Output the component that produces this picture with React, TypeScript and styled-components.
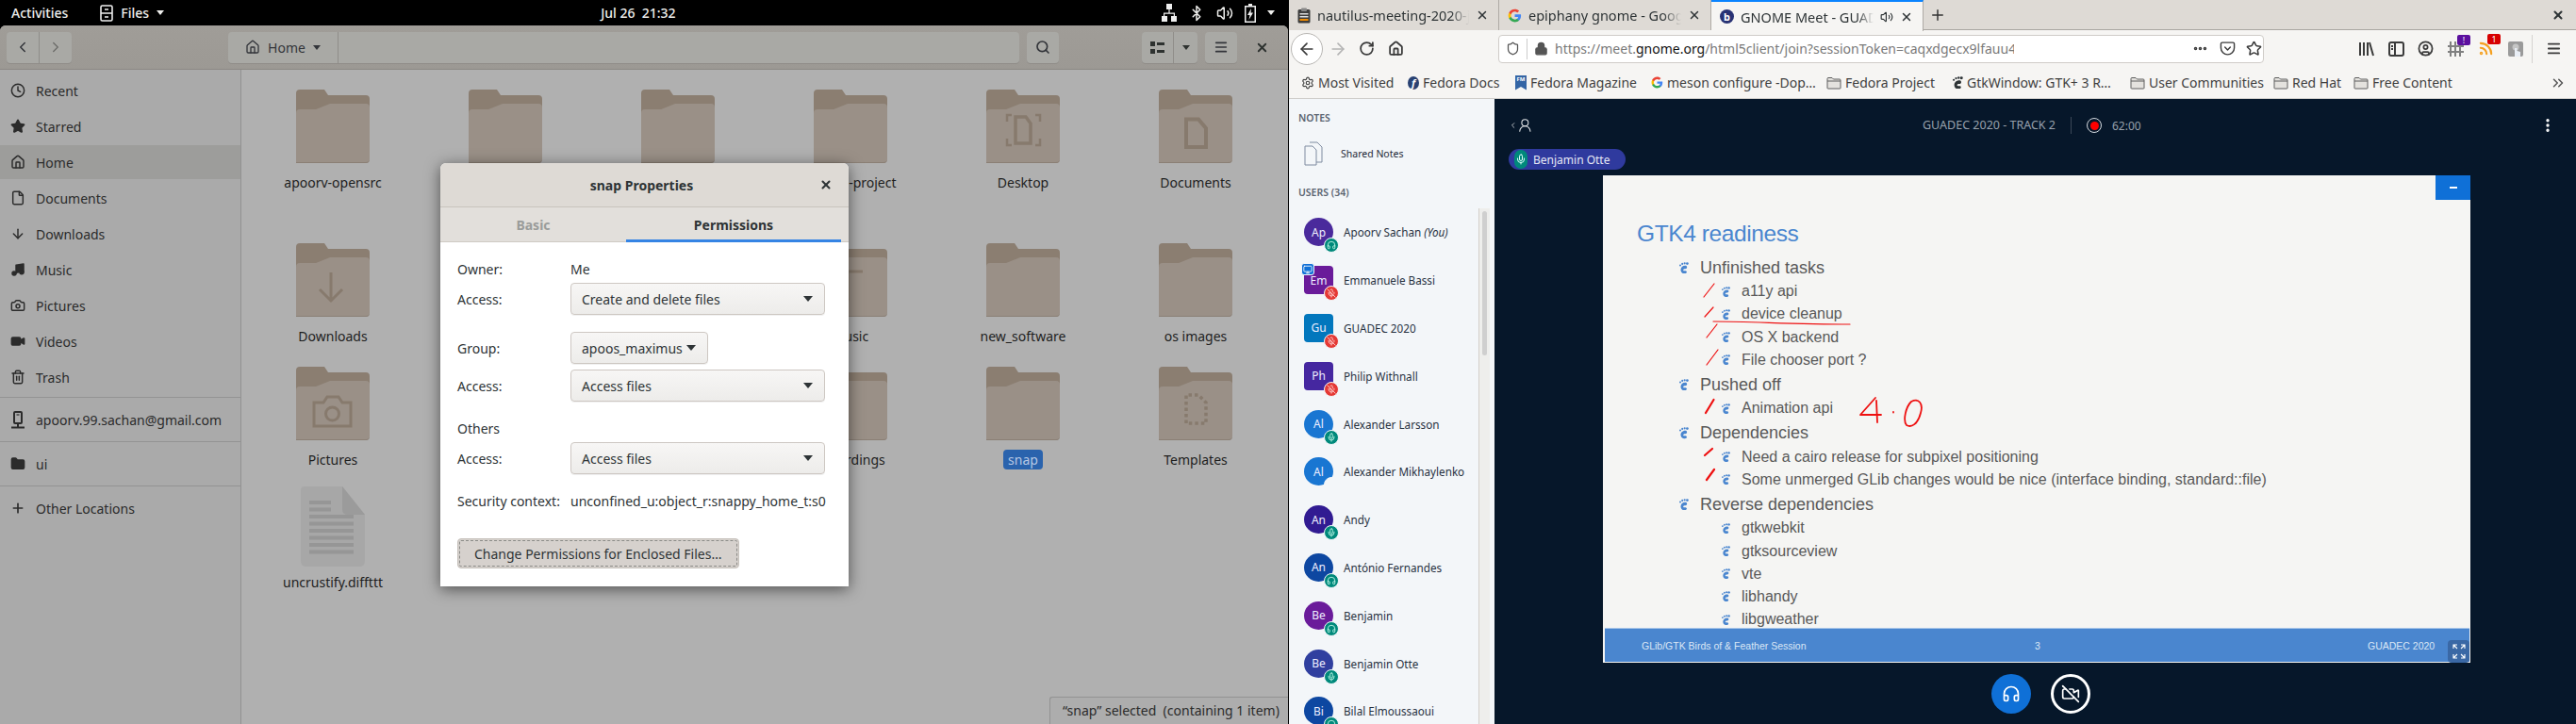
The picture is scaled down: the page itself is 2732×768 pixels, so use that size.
import React from "react";
import styled, { createGlobalStyle } from "styled-components";
import { Clock, Star, Home, File, ArrowDown, Music, Camera, Video, Trash2, Folder as FolderIc, Plus, Search, Menu, X, ChevronLeft, ChevronRight, ArrowLeft, ArrowRight, RotateCw, Shield, Lock, Headphones, Mic, MicOff, Monitor, Volume2, Bluetooth, Settings, CircleUser, ChevronsRight, Rss, VideoOff, UserRound, EllipsisVertical, Pocket, Ellipsis } from "lucide-react";

const Global = createGlobalStyle`
  html, body { margin: 0; padding: 0; background: #000; }
  body { font-family: "Noto Sans", "Open Sans", sans-serif; overflow: hidden; }
  * { box-sizing: border-box; }
`;

const Screen = styled.div`display: flex; width: 2732px; height: 768px; overflow: hidden;`;
const LeftMonitor = styled.div`width: 1367px; height: 768px; display: flex; flex-direction: column; background: #000;`;
const TopBar = styled.div`height: 27px; background: #000; color: #eeeeec; font-size: 14px; display: flex; align-items: center; padding: 0 0 0 12px; position: relative; flex: none;`;
const TopItem = styled.span`font-weight: 500;`;
const AppMenu = styled.div`display: flex; align-items: center; margin-left: 34px; gap: 8px;`;
const Clockface = styled.span`margin-left: 463px; width: 86px; font-size: 14px; font-weight: 500; white-space: pre;`;
const Tray = styled.div`display: flex; align-items: center; margin-left: auto; margin-right: 15px; gap: 12px;`;
const Caret = styled.i<{ $c?: string; $s?: number }>`display: inline-block; width: 0; height: 0; border-left: ${p => p.$s ?? 4}px solid transparent; border-right: ${p => p.$s ?? 4}px solid transparent; border-top: ${p => (p.$s ?? 4) + 1}px solid ${p => p.$c ?? "#eeeeec"};`;

const FilesWindow = styled.div`flex: 1; position: relative; display: flex; flex-direction: column; width: 1366px; background: #b0b0b0; border-radius: 6px 6px 0 0; overflow: hidden;`;
const HeaderBar = styled.div`height: 47px; flex: none; display: flex; align-items: center; padding-left: 7px; background: linear-gradient(#a09d98, #9c9994); border-bottom: 1px solid #8c8984;`;
const Linked = styled.div<{ $ml?: number }>`display: flex; height: 33px; margin-left: ${p => p.$ml ?? 0}px; border-radius: 4px; background: #a9a9a5; box-shadow: 0 1px 0 #8f8c88; color: #2e3230;`;
const HBtn = styled.div<{ $w: number; $div?: boolean; $dim?: boolean }>`width: ${p => p.$w}px; display: flex; align-items: center; justify-content: center; gap: 8px; font-size: 14px; color: ${p => p.$dim ? "#6f6f6c" : "#33353a"}; ${p => p.$div ? "border-right: 1px solid #8f8d89;" : ""}`;
const PathBar = styled(Linked)`width: 839px;`;
const ViewDots = styled.div`display: grid; grid-template-columns: 5px 8px; gap: 3px 2px; align-items: center; & i { height: 3px; background: #2e3230; display: block; } & i:nth-child(odd) { width: 5px; height: 5px; }`;
const CloseWrap = styled.div`margin-left: 19px; display: flex; color: #2e3230;`;
const FilesBody = styled.div`flex: 1; display: flex; min-height: 0;`;
const Side = styled.div`width: 256px; flex: none; background: #aaaaaa; border-right: 1px solid #929292; padding-top: 4px;`;
const SideRow = styled.div<{ $on?: boolean }>`height: 36px; margin-bottom: 2px; display: flex; align-items: center; color: #2b2b2b; font-size: 14px; background: ${p => p.$on ? "#9d9d9b" : "transparent"}; & svg { flex: none; }`;
const SideIcon = styled.span`width: 38px; display: flex; justify-content: center; padding-left: 7px; padding-right: 8px;`;
const SideSep = styled.div`height: 1px; background: #939393; margin: 3px 0 5px;`;
const SideRowLast = styled(SideRow)`margin-bottom: 0;`;
const SideSep2 = styled(SideSep)`margin-top: 5px;`;

const Grid = styled.div`flex: 1; display: grid; grid-template-columns: repeat(6, 183px); grid-template-rows: 163px 131px 130px auto; padding: 12px 0 0 5.5px;`;
const Cell = styled.div`display: flex; flex-direction: column; align-items: center;`;
const IconBox = styled.div`height: 96px; width: 96px; display: flex; align-items: center; justify-content: center; flex: none;`;
const Label = styled.div<{ $sel?: boolean }>`height: 21px; line-height: 21px; font-size: 14px; margin-top: 1px; color: ${p => p.$sel ? "#b7c8e4" : "#1e1e1e"}; background: ${p => p.$sel ? "#2a63ad" : "transparent"}; padding: 0 5px; border-radius: 4px; white-space: nowrap;`;
const StatusBox = styled.div`position: absolute; right: 0; bottom: 0; width: 253px; height: 29px; background: #adadad; border: 1px solid #929292; border-right: 0; border-bottom: 0; border-radius: 3px 0 0 0; font-size: 14px; color: #2b2b2b; padding-left: 13px; line-height: 27px; white-space: pre;`;

const Modal = styled.div`position: absolute; left: 467px; top: 146px; width: 433px; height: 449px; border-radius: 6px 6px 0 0; background: #fff; box-shadow: 0 3px 16px rgba(0,0,0,.55); color: #2e3436; font-size: 14px; display: flex; flex-direction: column; overflow: hidden;`;
const ModalTitle = styled.div`height: 47px; flex: none; background: #dedad5; border-bottom: 1px solid #c8c4bd; display: flex; align-items: center; justify-content: center; font-weight: 700; position: relative; padding-right: 6px;`;
const ModalClose = styled.span`position: absolute; right: 17px; top: 16px; display: flex;`;
const TabRow = styled.div`height: 37px; flex: none; background: #e2dfdb; border-bottom: 1px solid #cfcac4; display: flex; padding: 0 8px 0 0;`;
const ModalTab = styled.div<{ $on?: boolean; $w: number }>`width: ${p => p.$w}px; height: 37px; display: flex; align-items: center; justify-content: center; font-weight: 700; color: ${p => p.$on ? "#2e3436" : "#9a9c9a"}; border-bottom: ${p => p.$on ? "3px solid #3584e4" : "0"}; padding-top: ${p => p.$on ? "3px" : "0"};`;
const ModalBody = styled.div`padding: 0 25px 0 18px; display: flex; flex-direction: column;`;
const FormRow = styled.div<{ $top: number; $h?: number }>`display: grid; grid-template-columns: 120px 1fr; align-items: center; margin-top: ${p => p.$top}px; height: ${p => p.$h ?? 34}px; white-space: nowrap;`;
const Select = styled.div<{ $w?: number }>`height: 34px; width: ${p => p.$w ? p.$w + "px" : "100%"}; border: 1px solid #cdc7c2; border-radius: 4px; background: linear-gradient(#f7f6f5, #edecea); box-shadow: 0 1px 0 rgba(0,0,0,.06); display: flex; align-items: center; justify-content: space-between; padding: 0 12px 0 11px;`;
const ChangeBtn = styled.div`margin-top: 30px; width: 299px; height: 32px; border: 1px solid #c6c1bb; border-radius: 4px; background: #d6d1cd; padding: 1px; `;
const ChangeIn = styled.div`height: 100%; border: 1px dashed #8b8b87; border-radius: 2px; display: flex; align-items: center; padding-left: 15px;`;

const RightMonitor = styled.div`width: 1365px; height: 768px; display: flex; flex-direction: column; background: #f6f5f3;`;
const TabStrip = styled.div`height: 32px; flex: none; background: #dedad5; border-bottom: 1px solid #a9a6a1; display: flex; align-items: stretch; position: relative;`;
const BrowserTab = styled.div<{ $w: number; $on?: boolean }>`width: ${p => p.$w}px; flex: none; display: flex; align-items: center; padding: 0 10px 0 9px; gap: 7px; font-size: 14.5px; color: #2e3436; border-right: 1px solid #aeaaa5; background: ${p => p.$on ? "#f6f5f3" : "#dedad5"}; border-top: ${p => p.$on ? "2px solid #0a84ff" : "0"}; height: ${p => p.$on ? "33px" : "32px"};`;
const TabTitle = styled.span`flex: 1; overflow: hidden; white-space: nowrap; -webkit-mask-image: linear-gradient(90deg, #000 88%, transparent); mask-image: linear-gradient(90deg, #000 88%, transparent);`;
const PlusBtn = styled.div`display: flex; align-items: center; padding-left: 6px; color: #333;`;
const StripClose = styled.div`margin-left: auto; margin-right: 12px; display: flex; align-items: center; color: #2e3436;`;
const NavBar = styled.div`height: 39px; flex: none; display: flex; align-items: center; padding-left: 2px; color: #3b3b3b;`;
const BackCircle = styled.div`width: 34px; height: 34px; border-radius: 50%; border: 1px solid #b8b6b3; background: #fff; display: flex; align-items: center; justify-content: center;`;
const NavIcon = styled.span<{ $ml: number; $c?: string }>`margin-left: ${p => p.$ml}px; display: flex; position: relative; color: ${p => p.$c ?? "#3b3b3b"};`;
const UrlBox = styled.div`margin-left: 100px; width: 812px; height: 30px; background: #fff; border: 1px solid #cfccc8; border-radius: 4px; display: flex; align-items: center; padding-left: 7px; font-size: 14px; color: #7a7a7a;`;
const UrlSep = styled.span`width: 1px; height: 22px; background: #ccc; margin: 0 7px 0 7px;`;
const UrlText = styled.span`margin-left: 7px; white-space: nowrap; width: 487px; overflow: hidden;`;
const UrlHost = styled.b`font-weight: 400; color: #111;`;
const NavSep = styled.span`width: 1px; height: 30px; background: #d5d3d0; margin-left: 9px;`;
const MiniBadge = styled.span<{ $bg: string }>`position: absolute; top: -7px; right: -7px; width: 14px; height: 11px; border-radius: 2px; background: ${p => p.$bg}; color: #fff; font-size: 9px; line-height: 11px; text-align: center;`;
const Bookmarks = styled.div`height: 34px; flex: none; display: flex; align-items: center; padding-left: 13px; font-size: 14px; color: #3f3f3f; border-bottom: 1px solid #cfcdca; white-space: nowrap;`;
const Bm = styled.span<{ $w: number }>`width: ${p => p.$w}px; flex: none; display: flex; align-items: center; gap: 4px;`;
const RoundIc = styled.span<{ $bg: string; $plain?: boolean }>`width: ${p => p.$plain ? 15 : 12}px; height: ${p => p.$plain ? 15 : 14}px; border-radius: 50%; background: ${p => p.$bg}; color: #fff; font-size: 11px; font-weight: 700; font-style: ${p => p.$plain ? "normal" : "italic"}; line-height: ${p => p.$plain ? 15 : 14}px; text-align: center; flex: none;`;
const FmIc = styled.span`width: 12px; height: 16px; background: #3465a4; color: #fff; font-size: 6px; line-height: 9px; text-align: center; clip-path: polygon(0 0, 100% 0, 100% 100%, 50% 78%, 0 100%); flex: none; font-weight: 700;`;
const BmEnd = styled.span`margin-left: auto; margin-right: 10px; display: flex; color: #555;`;

const Meet = styled.div`flex: 1; min-height: 0; display: flex;`;
const UserPanel = styled.div`width: 218px; flex: none; background: #f3f6f9; display: flex; flex-direction: column; padding-top: 13px; overflow: hidden;`;
const PanelHead = styled.div<{ $mt?: number }>`height: 14px; line-height: 14px; font-size: 10.5px; font-weight: 600; color: #5b6572; padding-left: 10px; margin-top: ${p => p.$mt ?? 0}px; white-space: nowrap;`;
const NotesRow = styled.div`height: 30px; margin-top: 16px; padding-left: 16px; display: flex; align-items: center; gap: 19px; font-size: 10.5px; color: #1f2a38;`;
const UserWrap = styled.div`flex: 1; display: flex; margin-top: 10px; min-height: 0;`;
const UserList = styled.div`flex: 1; min-width: 0; overflow: hidden; padding-left: 16px;`;
const UserRow = styled.div`height: 50.8px; display: flex; align-items: center; gap: 11px; font-size: 11.7px; color: #27313f; white-space: nowrap;`;
const Avatar = styled.div<{ $bg: string; $sq?: boolean }>`width: 31px; height: 30px; flex: none; background: ${p => p.$bg}; border-radius: ${p => p.$sq ? "4px" : "50%"}; color: #eef; font-size: 12px; display: flex; align-items: center; justify-content: center; position: relative;`;
const Badge = styled.span<{ $bg: string }>`position: absolute; right: -6px; bottom: -7px; width: 16px; height: 16px; border-radius: 50%; background: ${p => p.$bg}; border: 1px solid #f3f6f9; color: #cfe; display: flex; align-items: center; justify-content: center;`;
const Presenter = styled.span`position: absolute; left: -3px; top: -3px; width: 14px; height: 13px; border-radius: 3px; background: #0f70d7; border: 1px solid #f3f6f9; color: #fff; display: flex; align-items: center; justify-content: center;`;
const Track = styled.div`width: 12px; margin-right: 5px; flex: none; background: #eeeeec; border-left: 1px solid #d4cfca; padding: 3px 3px 0 3px;`;
const Thumb = styled.div`height: 153px; border-radius: 3px; background: #cfcfcf;`;
const Stage = styled.div`flex: 1; background: #06172a; display: flex; flex-direction: column; min-width: 0;`;
const StageTop = styled.div`height: 53px; padding-top: 3px; display: flex; align-items: center; flex: none; color: #d5dae0;`;
const StageUser = styled.span`margin-left: 15px; display: flex; align-items: center; width: 26px; color: #e8eaec;`;
const StageTitle = styled.span`margin-left: 413px; font-size: 12.500px; color: #98a1ac; white-space: nowrap; width: 158px; border-right: 1px solid #3b4858; line-height: 18px;`;
const RecDot = styled.span`margin-left: 16px; width: 16px; height: 16px; border-radius: 50%; border: 1px solid #d5dae0; display: flex; align-items: center; justify-content: center; flex: none; & i { width: 9px; height: 9px; border-radius: 50%; background: #f00; display: block; }`;
const RecTime = styled.span`margin-left: 11px; font-size: 12px; color: #98a1ac;`;
const StageDots = styled.span`margin-left: auto; margin-right: 21px; display: flex; color: #fff;`;
const TalkerRow = styled.div`height: 22px; margin: 0 0 6px 15px; flex: none;`;
const Talker = styled.div`display: inline-flex; height: 22px; align-items: center; width: 124px; padding-left: 6px; gap: 6px; border-radius: 11px; background: #2f3a9e; color: #e6e8f5; font-size: 12px; white-space: nowrap;`;
const TalkerMic = styled.span`width: 14px; height: 20px; border-radius: 7px; background: #00897b; display: flex; align-items: center; justify-content: center; color: #dff;`;
const Slide = styled.div`margin-left: 115px; width: 920px; height: 517px; flex: none; background: #f5f5f3; position: relative; overflow: hidden; padding-top: 46px; font-family: "Liberation Sans", Arial, sans-serif; color: #595959;`;
const SlideTitle = styled.div`height: 32px; line-height: 32px; margin: 0 0 7px 36px; font-size: 24.500px; color: #4a86cf; letter-spacing: -0.4px;`;
const ItemA = styled.div<{ $first?: boolean }>`height: 26px; margin: ${p => p.$first ? 0 : 1}px 0 0 81px; display: flex; align-items: center; gap: 12px; font-size: 18px;`;
const ItemB = styled.div`height: 24.3px; margin-left: 125.5px; display: flex; align-items: center; gap: 12.5px; font-size: 16px; white-space: nowrap;`;
const SlideFooter = styled.div`position: absolute; left: 2px; right: 1px; bottom: 1px; height: 36px; background: #4a86cf; border-top: 1px solid #a9c6e8; color: #dbe6f5; font-size: 10.5px; display: flex; align-items: center; padding-left: 39px;`;
const FootA = styled.span`width: 417px; white-space: nowrap;`;
const FootB = styled.span`width: 353px;`;
const MinBtn = styled.div`position: absolute; right: 0; top: 0; width: 37px; height: 26px; background: #0f70d7; display: flex; justify-content: center; & i { width: 8px; height: 1.5px; margin-top: 12px; background: #fff; display: block; }`;
const FullBtn = styled.div`position: absolute; right: 1px; bottom: 0; width: 23px; height: 24px; border-radius: 4px; background: #3a68a5; color: #fff; display: flex; align-items: center; justify-content: center;`;
const Annot = styled.svg`position: absolute; left: 0; top: 0; pointer-events: none;`;
const Controls = styled.div`margin: 12px 0 0 527px; display: flex; gap: 21px; flex: none;`;
const RoundBtn = styled.div<{ $on?: boolean }>`width: 42px; height: 42px; border-radius: 50%; display: flex; align-items: center; justify-content: center; color: #fff; background: ${p => p.$on ? "#0f70d7" : "#06172a"}; border: ${p => p.$on ? "0" : "3px solid #fff"};`;

const Foot = ({ w, c = "#4a86cf" }: { w: number; c?: string }) => (
  <svg width={w} height={w * 1.25} viewBox="0 0 10 12.5" style={{ flex: "none" }}>
    <g fill={c}>
      <circle cx="1" cy="3.4" r="1" /><circle cx="3.2" cy="1.9" r="1.05" /><circle cx="5.7" cy="1.3" r="1.1" /><ellipse cx="8.4" cy="1.6" rx="1.4" ry="1.3" />
      <path d="M6.8 3.8C3.4 3.6 1.2 6 1.5 8.8 1.8 11.6 4.4 12.8 6.6 12.1 8.2 11.6 8.4 9.9 7.2 9.4 5.9 8.9 5.1 9.7 4.3 8.9 3.8 7.9 4.8 7.2 6.3 7.2 7.9 7.2 8.5 5.9 8 4.8 7.7 4.1 7.3 3.8 6.8 3.8Z" />
    </g>
  </svg>
);
const GLogo = ({ s }: { s: number }) => (
  <svg width={s} height={s} viewBox="0 0 24 24" style={{ flex: "none" }}>
    <path fill="#4285F4" d="M22.56 12.25c0-.78-.07-1.53-.2-2.25H12v4.26h5.92c-.26 1.37-1.04 2.53-2.21 3.31v2.77h3.57c2.08-1.92 3.28-4.74 3.28-8.09z" />
    <path fill="#34A853" d="M12 23c2.97 0 5.46-.98 7.28-2.66l-3.57-2.77c-.98.66-2.23 1.06-3.71 1.06-2.86 0-5.29-1.93-6.16-4.53H2.18v2.84C3.99 20.53 7.7 23 12 23z" />
    <path fill="#FBBC05" d="M5.84 14.09c-.22-.66-.35-1.36-.35-2.09s.13-1.43.35-2.09V7.07H2.18C1.43 8.55 1 10.22 1 12s.43 3.45 1.18 4.93l2.85-2.22.81-.62z" />
    <path fill="#EA4335" d="M12 5.38c1.62 0 3.06.56 4.21 1.64l3.15-3.15C17.45 2.09 14.97 1 12 1 7.7 1 3.99 3.47 2.18 7.07l3.66 2.84c.87-2.6 3.3-4.53 6.16-4.53z" />
  </svg>
);
const BmFolder = () => (
  <svg width="16" height="14" viewBox="0 0 16 14" style={{ flex: "none" }}><path d="M1 12.5V2.5Q1 1.5 2 1.5H6L7.5 3H14Q15 3 15 4V12.5Q15 13 14 13H2Q1 13 1 12.5Z M1 5H15" fill="#e4e2de" stroke="#5e5e5e" /></svg>
);
const Clipboard = () => (
  <svg width="14" height="17" viewBox="0 0 14 17" style={{ flex: "none" }}>
    <rect x="0.500" y="2" width="13" height="14.500" rx="1.500" fill="#3d3d3d" />
    <rect x="4" y="0.500" width="6" height="3.500" rx="1" fill="#888" />
    <rect x="2.500" y="6" width="9" height="1.500" fill="#ddd" /><rect x="2.500" y="9" width="9" height="1.500" fill="#ddd" />
    <rect x="2.500" y="12" width="9" height="2" fill="#f08a00" />
  </svg>
);
const DriveIc = () => (
  <svg width="16" height="19" viewBox="0 0 16 19" style={{ flex: "none" }} fill="none" stroke="#2b2b2b" strokeWidth="2">
    <rect x="4" y="1" width="8" height="12" rx="1" /><path d="M8 13V17M1 17.500H15" /><path d="M6.500 4H9.500" strokeWidth="1.200" />
  </svg>
);
const Expand = () => (
  <svg width="14" height="16" viewBox="0 0 14 16" fill="none" stroke="#fff" strokeWidth="1.100">
    <path d="M1 5V1H5M1 1L5 5M13 5V1H9M13 1L9 5M1 11V15H5M1 15L5 11M13 11V15H9M13 15L9 11" />
  </svg>
);

type Emblem = "none" | "down" | "music" | "camera" | "doc" | "desk" | "tmpl";
const FolderIcon = ({ e = "none" }: { e?: Emblem }) => (
  <svg width="78" height="78" viewBox="0 0 78 78">
    <path d="M0 4Q0 0 4 0H30L34 6H74Q78 6 78 10V40H0Z" fill="#8b7e71" />
    <path d="M0 25Q0 21 4 21H21L36 15H74Q78 15 78 19V73Q78 78 74 78H0Z" fill="#9a9087" />
    <path d="M0 77H74Q78 77 78 73V74Q78 78 74 78H0Z" fill="#8a7f75" />
    <g fill="none" stroke="#877a6d" strokeWidth="3">
      {e === "down" && <path d="M37 31V61M25 49L37 61L49 49" />}
      {e === "music" && <><circle cx="30" cy="60" r="6" /><path d="M36 60V30H52" /></>}
      {e === "camera" && <><path d="M19 63V38H29L33 32H45L49 38H58V63Z" /><circle cx="38.500" cy="50" r="7" /></>}
      {e === "doc" && <path d="M29 58V28.500H42L50 38V58Z" strokeWidth="4" transform="translate(0 3)" />}
      {e === "desk" && <><path d="M31 57V29H42L47 36V57Z" strokeWidth="3.500" /><path d="M22 34V27H27M57 34V27H52M22 52V59H27M57 52V59H52" strokeWidth="2.500" /></>}
      {e === "tmpl" && <path d="M29 60V30H42L50 38V60H29" strokeDasharray="3.500 3" strokeWidth="3.500" />}
    </g>
  </svg>
);
const DocIcon = () => (
  <svg width="68" height="85" viewBox="0 0 68 85">
    <path d="M4 0H44L68 30V79Q68 85 62 85H6Q0 85 0 79V4Q0 0 4 0Z" fill="#a7a7a7" />
    <path d="M44 0L68 30H50Q44 30 44 24Z" fill="#9b9b9b" />
    <g fill="#969696">
      <rect x="9" y="15" width="23" height="4" /><rect x="9" y="22.500" width="23" height="4" />
      {[30, 37.500, 45, 52.500, 60, 67.500].map(y => <rect key={y} x="9" y={y} width="47" height="4" />)}
    </g>
  </svg>
);

const Cabinet = () => (
  <svg width="14" height="18" viewBox="0 0 14 18"><rect x="1" y="1" width="12" height="16" rx="1.500" fill="none" stroke="#eee" strokeWidth="1.600" /><path d="M1 9H13M5 5H9M5 13H9" stroke="#eee" strokeWidth="1.500" /></svg>
);
const NetIc = () => (
  <svg width="16" height="19" viewBox="0 0 16 19" fill="#eee"><rect x="5" y="0" width="6" height="6" /><rect x="0" y="13" width="6" height="6" /><rect x="10" y="13" width="6" height="6" /><path d="M7.400 6h1.200v3.500H14v4h-1.200v-2.800H3.200v2.800H2v-4h5.400z" /></svg>
);
const BatIc = () => (
  <svg width="12" height="20" viewBox="0 0 12 20"><path d="M4 0H8V2H12V20H0V2H4Z" fill="#eee" /><rect x="1.500" y="3.500" width="9" height="15" fill="#000" /><path d="M7 5L3 12H5.500L4.500 17L9 9.500H6.500Z" fill="#eee" /></svg>
);
const SelectArrow = () => <Caret $c="#2e3436" $s={5} />;

const rows: { n: string; e?: Emblem; l?: string; sel?: boolean }[][] = [
  [{ n: "a", l: "apoorv-opensrc" }, { n: "b" }, { n: "c" }, { n: "d", l: "gnome-project" }, { n: "e", e: "desk", l: "Desktop" }, { n: "f", e: "doc", l: "Documents" }],
  [{ n: "g", e: "down", l: "Downloads" }, { n: "h" }, { n: "i" }, { n: "j", e: "music", l: "Music" }, { n: "k", l: "new_software" }, { n: "l", l: "os images" }],
  [{ n: "m", e: "camera", l: "Pictures" }, { n: "o" }, { n: "p" }, { n: "q", l: "Recordings" }, { n: "r", l: "snap", sel: true }, { n: "s", e: "tmpl", l: "Templates" }],
];
const side = [["Recent", Clock], ["Starred", Star], ["Home", Home], ["Documents", File], ["Downloads", ArrowDown], ["Music", Music], ["Pictures", Camera], ["Videos", Video], ["Trash", Trash2]] as const;
const filled = ["Starred", "Videos", "Music"];

type B = "head" | "mute" | "mic" | "none";
const users: { a: string; n: string; you?: boolean; bg: string; sq?: boolean; b: B; pres?: boolean }[] = [
  { a: "Ap", n: "Apoorv Sachan", you: true, bg: "#4a2a9c", b: "head" },
  { a: "Em", n: "Emmanuele Bassi", bg: "#6a1b9a", sq: true, b: "mute", pres: true },
  { a: "Gu", n: "GUADEC 2020", bg: "#0277bd", sq: true, b: "mute" },
  { a: "Ph", n: "Philip Withnall", bg: "#4527a0", sq: true, b: "mute" },
  { a: "Al", n: "Alexander Larsson", bg: "#1976d2", b: "mic" },
  { a: "Al", n: "Alexander Mikhaylenko", bg: "#1976d2", b: "none" },
  { a: "An", n: "Andy", bg: "#311b92", b: "mic" },
  { a: "An", n: "António Fernandes", bg: "#0d47a1", b: "head" },
  { a: "Be", n: "Benjamin", bg: "#6a1b9a", b: "head" },
  { a: "Be", n: "Benjamin Otte", bg: "#303f9f", b: "mic" },
  { a: "Bi", n: "Bilal Elmoussaoui", bg: "#0d47a1", b: "head" },
];
const UserBadge = ({ b }: { b: B }) => {
  if (b === "head") return <Badge $bg="#00897b"><Headphones size={10} /></Badge>;
  if (b === "mic") return <Badge $bg="#00897b"><Mic size={10} /></Badge>;
  if (b === "mute") return <Badge $bg="#e53935"><MicOff size={10} color="#fdd" /></Badge>;
  return <Badge $bg="#f3f6f9" />;
};

type Line = { t: string; top?: boolean; first?: boolean };
const lines: Line[] = [
  { t: "Unfinished tasks", top: true, first: true }, { t: "a11y api" }, { t: "device cleanup" }, { t: "OS X backend" }, { t: "File chooser port ?" },
  { t: "Pushed off", top: true }, { t: "Animation api" },
  { t: "Dependencies", top: true }, { t: "Need a cairo release for subpixel positioning" }, { t: "Some unmerged GLib changes would be nice (interface binding, standard::file)" },
  { t: "Reverse dependencies", top: true }, { t: "gtkwebkit" }, { t: "gtksourceview" }, { t: "vte" }, { t: "libhandy" }, { t: "libgweather" },
];

export default function App() {
  return (
    <Screen>
      <Global />
      <LeftMonitor>
        <TopBar>
          <TopItem>Activities</TopItem>
          <AppMenu><Cabinet /><TopItem>Files</TopItem><Caret /></AppMenu>
          <Clockface>{"Jul 26  21:32"}</Clockface>
          <Tray><NetIc /><Bluetooth size={18} /><Volume2 size={18} /><BatIc /><Caret /></Tray>
        </TopBar>
        <FilesWindow>
          <HeaderBar>
            <Linked>
              <HBtn $w={35} $div><ChevronLeft size={18} /></HBtn>
              <HBtn $w={34} $dim><ChevronRight size={18} /></HBtn>
            </Linked>
            <PathBar $ml={166}>
              <HBtn $w={117} $div><Home size={16} />Home<Caret $c="#33353a" /></HBtn>
            </PathBar>
            <Linked $ml={8}><HBtn $w={34}><Search size={16} strokeWidth={2.500} /></HBtn></Linked>
            <Linked $ml={88}>
              <HBtn $w={34} $div><ViewDots><i /><i /><i /><i /></ViewDots></HBtn>
              <HBtn $w={25}><Caret $c="#2e3230" /></HBtn>
            </Linked>
            <Linked $ml={8}><HBtn $w={34}><Menu size={16} strokeWidth={2.500} /></HBtn></Linked>
            <CloseWrap><X size={15} strokeWidth={3} /></CloseWrap>
          </HeaderBar>
          <FilesBody>
            <Side>
              {side.map(([t, I]) => (
                <SideRow key={t} $on={t === "Home"}>
                  <SideIcon><I size={16} strokeWidth={2.200} fill={filled.includes(t) ? "#2b2b2b" : "none"} /></SideIcon>{t}
                </SideRow>
              ))}
              <SideSep />
              <SideRowLast>
                <SideIcon><DriveIc /></SideIcon>apoorv.99.sachan@gmail.com
              </SideRowLast>
              <SideSep2 />
              <SideRowLast><SideIcon><FolderIc size={16} fill="#2b2b2b" /></SideIcon>ui</SideRowLast>
              <SideSep2 />
              <SideRowLast><SideIcon><Plus size={16} strokeWidth={2.500} /></SideIcon>Other Locations</SideRowLast>
            </Side>
            <Grid>
              {rows.flat().map(c => (
                <Cell key={c.n}>
                  <IconBox><FolderIcon e={c.e} /></IconBox>
                  {c.l && <Label $sel={c.sel}>{c.l}</Label>}
                </Cell>
              ))}
              <Cell>
                <IconBox><DocIcon /></IconBox>
                <Label>uncrustify.diffttt</Label>
              </Cell>
            </Grid>
          </FilesBody>
          <StatusBox>{"“snap” selected  (containing 1 item)"}</StatusBox>
          <Modal>
            <ModalTitle>snap Properties<ModalClose><X size={14} strokeWidth={3.500} /></ModalClose></ModalTitle>
            <TabRow>
              <ModalTab $w={197}>Basic</ModalTab>
              <ModalTab $w={228} $on>Permissions</ModalTab>
            </TabRow>
            <ModalBody>
              <FormRow $top={18} $h={20}><span>Owner:</span><span>Me</span></FormRow>
              <FormRow $top={5}><span>Access:</span><Select>Create and delete files<SelectArrow /></Select></FormRow>
              <FormRow $top={18}><span>Group:</span><Select $w={146}>apoos_maximus<SelectArrow /></Select></FormRow>
              <FormRow $top={6}><span>Access:</span><Select>Access files<SelectArrow /></Select></FormRow>
              <FormRow $top={18} $h={20}><span>Others</span><span /></FormRow>
              <FormRow $top={5}><span>Access:</span><Select>Access files<SelectArrow /></Select></FormRow>
              <FormRow $top={18} $h={20}><span>Security context:</span><span>unconfined_u:object_r:snappy_home_t:s0</span></FormRow>
              <ChangeBtn><ChangeIn>Change Permissions for Enclosed Files…</ChangeIn></ChangeBtn>
            </ModalBody>
          </Modal>
        </FilesWindow>
      </LeftMonitor>

      <RightMonitor>
        <TabStrip>
          <BrowserTab $w={223}><Clipboard /><TabTitle>nautilus-meeting-2020-jul</TabTitle><X size={14} strokeWidth={2.500} /></BrowserTab>
          <BrowserTab $w={225}><GLogo s={15} /><TabTitle>epiphany gnome - Google</TabTitle><X size={14} strokeWidth={2.500} /></BrowserTab>
          <BrowserTab $w={225} $on><RoundIc $bg="#283274" $plain>b</RoundIc><TabTitle>GNOME Meet - GUADEC</TabTitle><Volume2 size={14} /><X size={14} strokeWidth={2.500} /></BrowserTab>
          <PlusBtn><Plus size={18} /></PlusBtn>
          <StripClose><X size={14} strokeWidth={3.500} /></StripClose>
        </TabStrip>
        <NavBar>
          <BackCircle><ArrowLeft size={20} /></BackCircle>
          <NavIcon $ml={6} $c="#b4b4b4"><ArrowRight size={20} /></NavIcon>
          <NavIcon $ml={12}><RotateCw size={17} strokeWidth={2.500} /></NavIcon>
          <NavIcon $ml={14}><Home size={17} strokeWidth={2.500} /></NavIcon>
          <UrlBox>
            <Shield size={15} color="#555" />
            <UrlSep />
            <Lock size={15} color="#555" fill="#555" />
            <UrlText>https://meet.<UrlHost>gnome.org</UrlHost>/html5client/join?sessionToken=caqxdgecx9lfauu4</UrlText>
            <NavIcon $ml={189}><Ellipsis size={17} strokeWidth={3} /></NavIcon>
            <NavIcon $ml={12}><Pocket size={17} /></NavIcon>
            <NavIcon $ml={11}><Star size={17} strokeWidth={2.200} /></NavIcon>
          </UrlBox>
          <NavIcon $ml={100}><svg width="17" height="16" viewBox="0 0 17 16" stroke="#3b3b3b" strokeWidth="2" fill="none"><path d="M2 1V15M6 1V15M10 1V15M12 1L16 15" /></svg></NavIcon>
          <NavIcon $ml={15}><svg width="17" height="16" viewBox="0 0 17 16" fill="none" stroke="#3b3b3b" strokeWidth="2"><rect x="1" y="1" width="15" height="14" rx="2" /><path d="M7 1V15M3 5H5M3 8H5" /></svg></NavIcon>
          <NavIcon $ml={14}><CircleUser size={17} strokeWidth={2.500} /></NavIcon>
          <NavIcon $ml={15} $c="#8a8a8a"><svg width="17" height="16" viewBox="0 0 17 16" stroke="#808080" strokeWidth="2" fill="none"><path d="M3 0V16M8 0V16M13 0V16M0 5H17M0 11H17" /></svg><MiniBadge $bg="#5b0f9e">!</MiniBadge></NavIcon>
          <NavIcon $ml={15} $c="#f5a020"><Rss size={17} strokeWidth={3} /><MiniBadge $bg="#d70000">1</MiniBadge></NavIcon>
          <NavIcon $ml={15}><svg width="16" height="16" viewBox="0 0 16 16"><rect width="16" height="16" rx="2" fill="#9a9a9a" /><circle cx="8" cy="6" r="3.500" fill="#c5c5c5" /><path d="M7 16V7H9.500V10L13 11V16Z" fill="#e9eef5" /></svg></NavIcon>
          <NavSep />
          <NavIcon $ml={14}><Menu size={17} strokeWidth={2.500} /></NavIcon>
        </NavBar>
        <Bookmarks>
          <Bm $w={113}><Settings size={14} color="#444" />Most Visited</Bm>
          <Bm $w={114}><RoundIc $bg="#294172">f</RoundIc>Fedora Docs</Bm>
          <Bm $w={144}><FmIc>FM</FmIc>Fedora Magazine</Bm>
          <Bm $w={186}><GLogo s={13} />meson configure -Dop…</Bm>
          <Bm $w={134}><BmFolder />Fedora Project</Bm>
          <Bm $w={188}><Foot w={11} c="#2e3436" />GtkWindow: GTK+ 3 R…</Bm>
          <Bm $w={152}><BmFolder />User Communities</Bm>
          <Bm $w={85}><BmFolder />Red Hat</Bm>
          <Bm $w={110}><BmFolder />Free Content</Bm>
          <BmEnd><ChevronsRight size={18} /></BmEnd>
        </Bookmarks>
        <Meet>
          <UserPanel>
            <PanelHead>NOTES</PanelHead>
            <NotesRow>
              <svg width="20" height="26" viewBox="0 0 20 26" fill="#f3f6f9" stroke="#7f8ba0"><path d="M6 1H14L19 6V22H13" /><path d="M1 5H9L13 9V25H1Z" /></svg>
              Shared Notes
            </NotesRow>
            <PanelHead $mt={19}>USERS (34)</PanelHead>
            <UserWrap>
              <UserList>
                {users.map(u => (
                  <UserRow key={u.n}>
                    <Avatar $bg={u.bg} $sq={u.sq}>
                      {u.a}
                      {u.pres && <Presenter><Monitor size={10} /></Presenter>}
                      <UserBadge b={u.b} />
                    </Avatar>
                    <span>{u.n}{u.you && <em> (You)</em>}</span>
                  </UserRow>
                ))}
              </UserList>
              <Track><Thumb /></Track>
            </UserWrap>
          </UserPanel>
          <Stage>
            <StageTop>
              <StageUser><ChevronLeft size={10} /><UserRound size={18} strokeWidth={1.500} /></StageUser>
              <StageTitle>GUADEC 2020 - TRACK 2</StageTitle>
              <RecDot><i /></RecDot>
              <RecTime>62:00</RecTime>
              <StageDots><EllipsisVertical size={18} strokeWidth={2.500} /></StageDots>
            </StageTop>
            <TalkerRow><Talker><TalkerMic><Mic size={12} /></TalkerMic>Benjamin Otte</Talker></TalkerRow>
            <Slide>
              <SlideTitle>GTK4 readiness</SlideTitle>
              {lines.map(l => l.top
                ? <ItemA key={l.t} $first={l.first}><Foot w={10} />{l.t}</ItemA>
                : <ItemB key={l.t}><Foot w={9} />{l.t}</ItemB>)}
              <SlideFooter>
                <FootA>GLib/GTK Birds of &amp; Feather Session</FootA>
                <FootB>3</FootB>
                <span>GUADEC 2020</span>
              </SlideFooter>
              <MinBtn><i /></MinBtn>
              <FullBtn><Expand /></FullBtn>
              <Annot width="920" height="517" viewBox="1700 186 920 517" fill="none" stroke="#ee1010" strokeLinecap="round" strokeLinejoin="round">
                <g strokeWidth="1.200">
                  <path d="M1818 301L1807 315" />
                  <path d="M1817 326L1808 336" />
                  <path d="M1817 341C1860 341 1900 344 1962 344" />
                  <path d="M1821 344L1810 358" />
                  <path d="M1822 371L1810 387" />
                </g>
                <g strokeWidth="2.200">
                  <path d="M1817.500 424L1809 438" />
                  <path d="M1816 476L1808 483" />
                  <path d="M1818 498L1810 509" />
                </g>
                <g strokeWidth="1.800">
                  <path d="M1989 422L1973 440H1995" />
                  <path d="M1990 425L1991 448" />
                  <path d="M2008 437V437.500" />
                  <path d="M2027 426C2021 432 2018 446 2022 451C2027 454 2034 450 2037 438C2040 428 2035 422 2027 426Z" />
                </g>
              </Annot>
            </Slide>
            <Controls>
              <RoundBtn $on><Headphones size={20} /></RoundBtn>
              <RoundBtn><VideoOff size={20} /></RoundBtn>
            </Controls>
          </Stage>
        </Meet>
      </RightMonitor>
    </Screen>
  );
}
